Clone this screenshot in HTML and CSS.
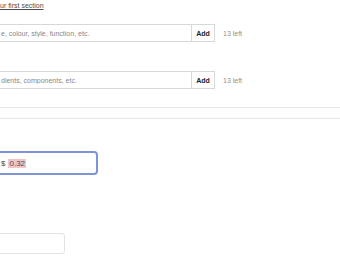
FILE: index.html
```html
<!DOCTYPE html>
<html lang="en">
<head>
    <meta charset="UTF-8">
    <meta name="viewport" content="width=device-width, initial-scale=1.0">
    <title>Listing details</title>
    <link rel="stylesheet" href="styles.css">
</head>
<body>
    <div class="form">
        <p class="intro"><a href="#">ur first section</a></p>

        <div class="tag-row">
            <input class="tag-input" type="text" placeholder="e, colour, style, function, etc.">
            <button class="add">Add</button>
            <span class="left">13 left</span>
        </div>

        <div class="tag-row second">
            <input class="tag-input" type="text" placeholder="dients, components, etc.">
            <button class="add">Add</button>
            <span class="left">13 left</span>
        </div>

        <div class="rule first"></div>
        <div class="rule"></div>

        <div class="price">
            <span class="currency">$</span>
            <span class="value">0.32</span>
        </div>

        <div class="quantity"></div>
    </div>
</body>
</html>
```

FILE: styles.css
```css
body {
    margin: 0;
    overflow: hidden;
    background-color: #fff;
    font-family: "Liberation Sans", Arial, sans-serif;
    font-size: 7px;
    color: #222;
}
.form {
    margin-left: -10px;
}
.intro {
    margin: 0;
    padding: 1px 0 0 10px;
    line-height: 10px;
}
.intro a,
.intro a:visited {
    color: #4d4d4d;
    text-decoration: underline;
}
.tag-row {
    display: flex;
    align-items: center;
    margin-top: 13px;
    height: 18px;
}
.tag-row.second {
    margin-top: 29px;
}
.tag-input {
    box-sizing: border-box;
    width: 202px;
    height: 18px;
    margin: 0;
    padding: 0 0 0 10px;
    border: 1px solid #d8d8d8;
    border-radius: 0;
    font-family: inherit;
    font-size: 7px;
    color: #222;
    outline: none;
}
.tag-input::placeholder {
    color: #888;
}
.add {
    box-sizing: border-box;
    width: 24px;
    height: 18px;
    margin: 0 0 0 -1px;
    padding: 0;
    border: 1px solid #d8d8d8;
    background-color: #fff;
    font-family: inherit;
    font-size: 7px;
    font-weight: bold;
    color: #222;
}
.left {
    margin-left: 8px;
    color: #8f8f8f;
}
.rule {
    height: 1px;
    background-color: #e6e6e6;
}
.rule.first {
    margin-top: 18px;
}
.rule + .rule {
    margin-top: 10px;
}
.price {
    box-sizing: border-box;
    display: flex;
    align-items: center;
    gap: 3px;
    width: 108px;
    height: 24px;
    margin-top: 32px;
    padding-left: 10px;
    border: 2px solid #7d95d6;
    border-radius: 4px;
    font-size: 8px;
    color: #4d4d4d;
}
.currency {
    margin-left: -1px;
}
.value {
    background-color: #f2c6c6;
    padding: 0 1px;
    line-height: 9px;
}
.quantity {
    box-sizing: border-box;
    width: 75px;
    height: 21px;
    margin-top: 58px;
    border: 1px solid #e2e2e2;
    border-radius: 3px;
}
```
